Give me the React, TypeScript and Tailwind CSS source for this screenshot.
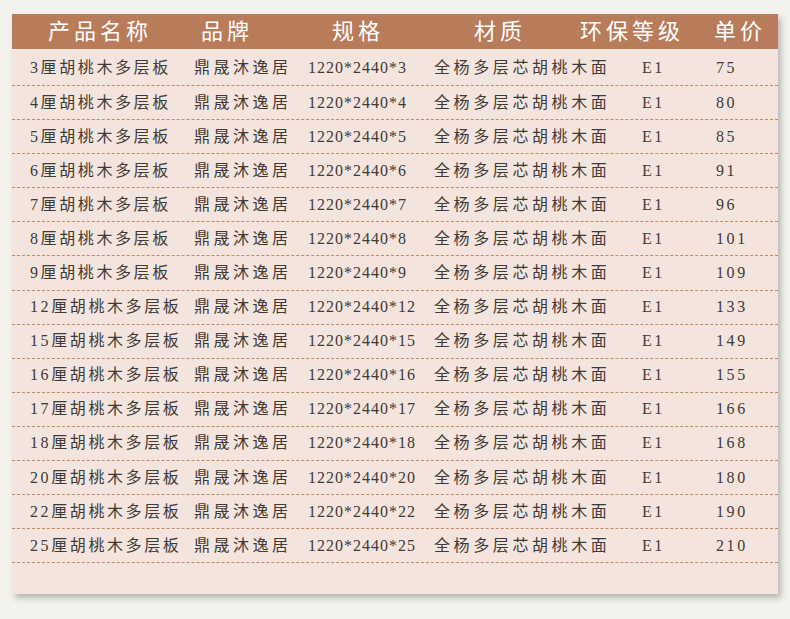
const rows: [string, string, string][] = [
  ["3", "3", "75"], ["4", "4", "80"], ["5", "5", "85"], ["6", "6", "91"], ["7", "7", "96"],
  ["8", "8", "101"], ["9", "9", "109"], ["12", "12", "133"], ["15", "15", "149"], ["16", "16", "155"],
  ["17", "17", "166"], ["18", "18", "168"], ["20", "20", "180"], ["22", "22", "190"], ["25", "25", "210"],
];

const font = { fontFamily: '"Liberation Serif", "Noto Sans CJK SC", serif' };

export default function App() {
  return (
    <div className="w-[790px] h-[619px] bg-[#f4f2ec] pt-[14px] pl-[12px]" style={font}>
      <div className="w-[766px] h-[580px] bg-[#f3e5de] shadow-[3px_4px_6px_rgba(0,0,0,0.25)]">
        <div className="h-[35px] bg-[#b97c5b] flex items-center text-white text-[22px] tracking-[4px]">
          <div className="w-[176px] text-center">产品名称</div>
          <div className="w-[78px] text-center">品牌</div>
          <div className="w-[184px] text-center">规格</div>
          <div className="w-[100px] text-center">材质</div>
          <div className="w-[164px] text-center">环保等级</div>
          <div className="w-[52px] text-center">单价</div>
        </div>
        {rows.map(([n, s, p], i) => (
          <div
            key={i}
            className={`${i === 0 ? "h-[37px] pt-[2px]" : "h-[34.1px]"} flex items-center border-b border-dashed border-[#c08a6a] text-[16px] text-[#3f3a36] tracking-[2.6px] whitespace-nowrap`}
          >
            <div className="w-[182px] pl-[18px]">{n}厘胡桃木多层板</div>
            <div className="w-[114px] tracking-[3.5px]">鼎晟沐逸居</div>
            <div className="w-[126px] tracking-[1px]">1220*2440*{s}</div>
            <div className="w-[208px] tracking-[3.6px]">全杨多层芯胡桃木面</div>
            <div className="w-[74px]">E1</div>
            <div className="w-[50px]">{p}</div>
          </div>
        ))}
      </div>
    </div>
  );
}
